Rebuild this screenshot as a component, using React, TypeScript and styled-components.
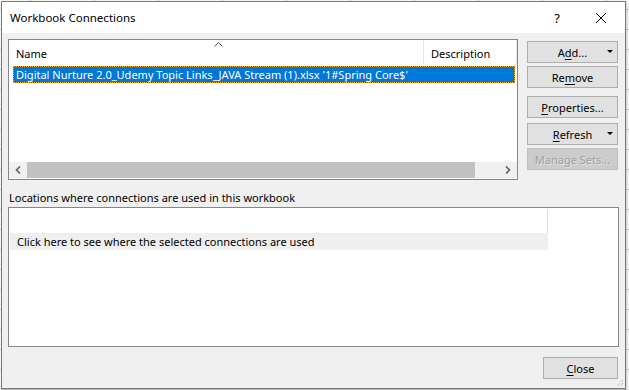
import React from "react"
import styled, { createGlobalStyle, css } from "styled-components"

const GlobalStyle = createGlobalStyle`
  html, body {
    margin: 0;
    padding: 0;
    width: 629px;
    height: 390px;
    overflow: hidden;
    background-color: #ffffff;
    background-image:
      linear-gradient(to right, #d4d4d4 1px, transparent 1px),
      linear-gradient(to bottom, #d4d4d4 1px, transparent 1px);
    background-size: 64px 20px;
    background-position: 30px 9px;
  }
  * { box-sizing: border-box; }
`

const Dialog = styled.div`
  margin: 1px 0 0 1px;
  width: 625px;
  height: 388px;
  border: 1px solid #7a7a7a;
  background: #f0f0f0;
  display: flex;
  flex-direction: column;
  font-family: "Noto Sans", "Liberation Sans", sans-serif;
  font-size: 11px;
  color: #000;
  position: relative;
  box-shadow: 1px 1px 3px rgba(0, 0, 0, 0.25);
`

const TitleBar = styled.div`
  height: 31px;
  background: #fff;
  display: flex;
  align-items: center;
  padding-left: 8px;
  padding-right: 2px;
`

const Title = styled.div`
  flex: 1;
  font-size: 11.5px;
`

const TitleButton = styled.div`
  width: 44px;
  height: 31px;
  display: flex;
  align-items: center;
  justify-content: center;
  font-size: 13px;
`

const Body = styled.div`
  flex: 1;
  display: flex;
  flex-direction: column;
  padding: 6px 6px 8px 6px;
`

const TopRow = styled.div`
  display: flex;
`

const ListBox = styled.div`
  width: 510px;
  height: 141px;
  border: 1px solid #828790;
  background: #fff;
  display: flex;
  flex-direction: column;
`

const Header = styled.div`
  height: 24px;
  display: flex;
`

const HeaderCell = styled.div<{ $width?: number }>`
  ${(p) => (p.$width ? css`width: ${p.$width}px;` : css`flex: 1;`)}
  display: flex;
  align-items: flex-end;
  padding: 0 0 3px 7px;
  border-right: 1px solid #e5e5e5;
  position: relative;
`

const SortCaret = styled.svg`
  position: absolute;
  left: 205px;
  top: 2px;
`

const Rows = styled.div`
  flex: 1;
  padding: 2px 0 0 4px;
`

const Row = styled.div<{ $selected?: boolean }>`
  height: 17px;
  width: 502px;
  display: flex;
  align-items: center;
  padding-left: 3px;
  white-space: nowrap;
  ${(p) =>
    p.$selected &&
    css`
      background: #0078d7;
      color: #fff;
      outline: 1px dotted #f5a623;
      outline-offset: -1px;
    `}
`

const HScroll = styled.div`
  height: 16px;
  background: #f0f0f0;
  display: flex;
  align-items: center;
  margin-bottom: 1px;
`

const ScrollArrow = styled.div`
  width: 18px;
  height: 16px;
  display: flex;
  align-items: center;
  justify-content: center;
`

const ScrollTrack = styled.div`
  flex: 1;
  height: 16px;
  display: flex;
`

const Thumb = styled.div`
  height: 16px;
  background: #c1c1c1;
`

const ButtonColumn = styled.div`
  display: flex;
  flex-direction: column;
  margin-left: 9px;
  padding-top: 2px;
`

const Button = styled.div<{ $gap?: number; $disabled?: boolean; $width?: number }>`
  width: ${(p) => p.$width ?? 91}px;
  height: 22px;
  margin-top: ${(p) => p.$gap ?? 0}px;
  background: #e1e1e1;
  border: 1px solid #adadad;
  display: flex;
  align-items: center;
  justify-content: center;
  position: relative;
  ${(p) =>
    p.$disabled &&
    css`
      background: #cccccc;
      border-color: #bfbfbf;
      color: #a0a0a0;
      text-shadow: 1px 1px 0 #e4e4e4;
    `}
`

const DropArrow = styled.span`
  position: absolute;
  right: 4px;
  top: 8px;
  width: 0;
  height: 0;
  border-left: 3px solid transparent;
  border-right: 3px solid transparent;
  border-top: 3px solid #000;
`

const Label = styled.div`
  margin-top: 9px;
  height: 18px;
  line-height: 18px;
  padding-left: 1px;
`

const LocationBox = styled.div`
  height: 140px;
  width: 611px;
  border: 1px solid #828790;
  background: #fff;
  padding: 1px 0 0 1px;
`

const LocationList = styled.div`
  width: 538px;
  display: flex;
  flex-direction: column;
`

const Spacer = styled.div`
  height: 24px;
  border-right: 1px solid #e0e0e0;
`

const LocationRow = styled.div`
  height: 17px;
  background: #efefef;
  display: flex;
  align-items: center;
  padding-left: 7px;
`

const Footer = styled.div`
  margin-top: auto;
  display: flex;
  justify-content: flex-end;
  padding-right: 1px;
  padding-bottom: 1px;
`

const Grip = styled.svg`
  position: absolute;
  right: 1px;
  bottom: 1px;
`

const U = styled.span`
  text-decoration: underline;
  text-underline-offset: 2px;
`

export default function App() {
  return (
    <>
      <GlobalStyle />
      <Dialog>
        <TitleBar>
          <Title>Workbook Connections</Title>
          <TitleButton>?</TitleButton>
          <TitleButton>
            <svg width="12" height="12" viewBox="0 0 12 12">
              <path d="M1 1L11 11M11 1L1 11" stroke="#000" strokeWidth="1" />
            </svg>
          </TitleButton>
        </TitleBar>
        <Body>
          <TopRow>
            <ListBox>
              <Header>
                <HeaderCell $width={415}>
                  Name
                  <SortCaret width="9" height="5" viewBox="0 0 9 5">
                    <path d="M0.5 4.5L4.5 0.5L8.5 4.5" fill="none" stroke="#555" />
                  </SortCaret>
                </HeaderCell>
                <HeaderCell>Description</HeaderCell>
              </Header>
              <Rows>
                <Row $selected>
                  Digital Nurture 2.0_Udemy Topic Links_JAVA Stream (1).xlsx '1#Spring Core$'
                </Row>
              </Rows>
              <HScroll>
                <ScrollArrow>
                  <svg width="6" height="8" viewBox="0 0 6 8">
                    <path d="M5 0.5L1.5 4L5 7.5" fill="none" stroke="#606060" strokeWidth="1.6" />
                  </svg>
                </ScrollArrow>
                <ScrollTrack>
                  <Thumb style={{ width: 448 }} />
                </ScrollTrack>
                <ScrollArrow>
                  <svg width="6" height="8" viewBox="0 0 6 8">
                    <path d="M1 0.5L4.5 4L1 7.5" fill="none" stroke="#606060" strokeWidth="1.6" />
                  </svg>
                </ScrollArrow>
              </HScroll>
            </ListBox>
            <ButtonColumn>
              <Button>
                A<U>d</U>d...
                <DropArrow />
              </Button>
              <Button $gap={3}>
                Re<U>m</U>ove
              </Button>
              <Button $gap={8}>
                <U>P</U>roperties...
              </Button>
              <Button $gap={5}>
                <U>R</U>efresh
                <DropArrow />
              </Button>
              <Button $gap={3} $disabled>
                Manage Sets...
              </Button>
            </ButtonColumn>
          </TopRow>
          <Label>Locations where connections are used in this workbook</Label>
          <LocationBox>
            <LocationList>
              <Spacer />
              <LocationRow>Click here to see where the selected connections are used</LocationRow>
            </LocationList>
          </LocationBox>
          <Footer>
            <Button $width={75}>
              <U>C</U>lose
            </Button>
          </Footer>
        </Body>
        <Grip width="10" height="10" viewBox="0 0 10 10">
          <path d="M9 3L3 9M9 6L6 9" stroke="#a0a0a0" strokeWidth="1" strokeDasharray="1 1" />
        </Grip>
      </Dialog>
    </>
  )
}
